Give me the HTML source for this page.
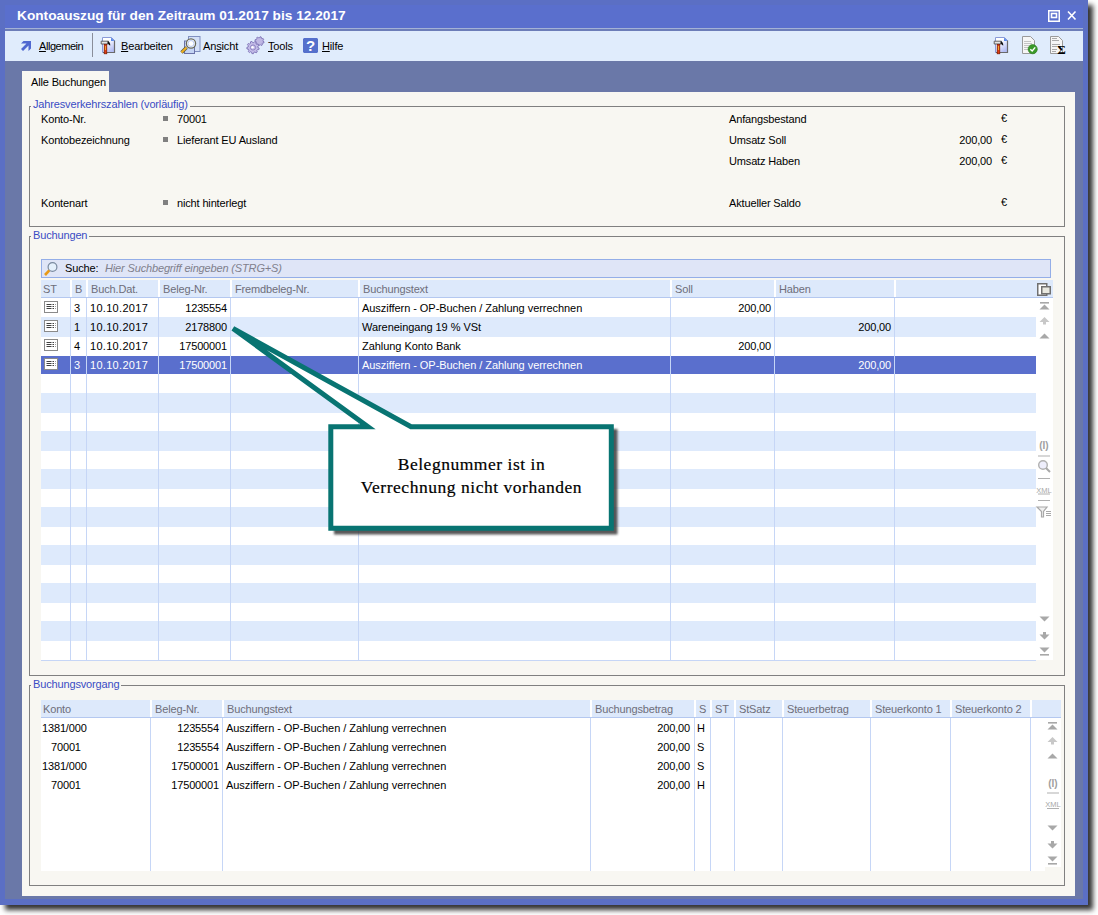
<!DOCTYPE html>
<html><head><meta charset="utf-8"><style>
*{margin:0;padding:0;box-sizing:border-box}
html,body{width:1098px;height:915px;overflow:hidden;background:#fff;font-family:"Liberation Sans",sans-serif;font-size:11px;color:#000}
.a{position:absolute}
.t{position:absolute;white-space:nowrap;line-height:13px;letter-spacing:-0.15px}
.r{text-align:right}
.gb{position:absolute;border:1px solid #808080}
.leg{position:absolute;background:#f8f7f2;color:#3a4cc4;padding:0 2px 0 2px;line-height:13px;white-space:nowrap;letter-spacing:-0.15px}
.hd{color:#6e6e7a}
.u{text-decoration:underline}
svg{position:absolute;overflow:visible}
</style></head><body>
<div class="a" style="left:0;top:0;width:1088px;height:905px;box-shadow:5px 5px 5px 0 rgba(0,0,0,0.8)"></div>
<div class="a" style="left:0px;top:0px;width:1088px;height:905px;background:#5b6fc4;"></div>
<div class="a" style="left:5px;top:5px;width:1078px;height:23px;background:#5a6fcd;"></div>
<div class="t " style="left:17px;top:7px;color:#fff;font-weight:bold;font-size:13.7px;line-height:17px;letter-spacing:0">Kontoauszug für den Zeitraum 01.2017 bis 12.2017</div>
<svg style="left:1047px;top:9px" width="14" height="14"><rect x="1.75" y="1.75" width="10.5" height="10.5" fill="none" stroke="#fff" stroke-width="1.5"/><rect x="4.5" y="4.5" width="5" height="4" fill="none" stroke="#fff" stroke-width="1.6"/></svg>
<svg style="left:1066px;top:10px" width="12" height="12"><path d="M2 1.5 L9.5 9.5 M9.5 1.5 L2 9.5" stroke="#fff" stroke-width="1.6"/></svg>
<div class="a" style="left:5px;top:28px;width:1078px;height:1px;background:#a4b2d6;"></div>
<div class="a" style="left:5px;top:29px;width:1078px;height:2px;background:#6c7db8;"></div>
<div class="a" style="left:5px;top:31px;width:1078px;height:30px;background:#e0ecfc;"></div>
<div class="a" style="left:5px;top:61px;width:1078px;height:838px;background:#6a78a8;"></div>
<div class="a" style="left:22px;top:71px;width:87px;height:22px;background:#f8f7f2;"></div>
<div class="a" style="left:22px;top:92px;width:1053px;height:804px;background:#f8f7f2;"></div>
<div class="t " style="left:31px;top:76px;">Alle Buchungen</div>
<svg style="left:16px;top:34px" width="24" height="24"><path d="M5 9.5 L7.5 7 L15 7 L15 14.5 L12.5 17 L12.5 11.5 L7 17 L5 15 L10.5 9.5 Z" fill="#5068d0"/></svg>
<div class="t " style="left:39px;top:40px;letter-spacing:-0.45px"><span class="u">A</span>llgemein</div>
<div class="a" style="left:92px;top:33px;width:1px;height:24px;background:#8a8e9a;"></div>
<svg style="left:96px;top:34px" width="24" height="24">
<defs><linearGradient id="dg96" x1="0" y1="0" x2="0.6" y2="1"><stop offset="0" stop-color="#fff"/><stop offset="0.35" stop-color="#fff"/><stop offset="1" stop-color="#b4bef4"/></linearGradient></defs>
<path d="M6.5 3.5 H15.5 L18.5 6.5 V18.5 H6.5 Z" fill="url(#dg96)" stroke="#8a9ad8" stroke-width="1"/>
<path d="M18.5 6.5 V18.5 H7" fill="none" stroke="#6a6a6a" stroke-width="1.2"/>
<path d="M15 3.5 L18.5 7 H15 Z" fill="#5a8ae8"/>
<path d="M5.2 7.2 H12.5 V10 H5.2 Z" fill="#e6e6e6" stroke="#555" stroke-width="0.9"/>
<path d="M11.5 7.2 Q14.3 7.5 14.3 11.5 L13 11 Q12.8 9.5 11.5 10 Z" fill="#111"/>
<rect x="8.2" y="10.3" width="2.6" height="9.5" fill="#e03c12" stroke="#7a1a00" stroke-width="0.7"/>
<rect x="9" y="12" width="0.8" height="4" fill="#f8c030"/>
</svg>
<div class="t " style="left:121px;top:40px;"><span class="u">B</span>earbeiten</div>
<svg style="left:180px;top:35px" width="22" height="20">
<rect x="8.5" y="1.5" width="11.5" height="15" fill="#d4e0f8" stroke="#8090c0" stroke-width="1"/>
<rect x="4.5" y="6" width="10" height="12.5" fill="#c4d4f4" stroke="#6a72a8" stroke-width="1"/>
<circle cx="11" cy="8.5" r="4.6" fill="#fff" stroke="#6a6a5a" stroke-width="1.3"/><circle cx="11" cy="8.5" r="3" fill="none" stroke="#b8c8f0" stroke-width="1"/>
<path d="M1.5 17.5 L6.5 12.5" stroke="#5a5a40" stroke-width="3.4"/><path d="M1.5 17.5 L6.5 12.5" stroke="#f0b020" stroke-width="2"/>
</svg>
<div class="t " style="left:203px;top:40px;">An<span class="u">s</span>icht</div>
<svg style="left:245px;top:36px" width="22" height="20">
<path d="M18.10 5.30 L19.07 5.84 L18.75 7.06 L17.64 7.06 L17.05 7.85 L17.35 8.91 L16.26 9.55 L15.48 8.76 L14.50 8.90 L13.96 9.87 L12.74 9.55 L12.74 8.44 L11.95 7.85 L10.89 8.15 L10.25 7.06 L11.04 6.28 L10.90 5.30 L9.93 4.76 L10.25 3.54 L11.36 3.54 L11.95 2.75 L11.65 1.69 L12.74 1.05 L13.52 1.84 L14.50 1.70 L15.04 0.73 L16.26 1.05 L16.26 2.16 L17.05 2.75 L18.11 2.45 L18.75 3.54 L17.96 4.32 Z" fill="#c0b8e4" stroke="#7a70b4" stroke-width="0.9"/>
<path d="M12.90 11.50 L14.17 12.15 L13.83 13.62 L12.40 13.65 L11.75 14.65 L12.31 15.96 L11.10 16.87 L9.99 15.98 L8.85 16.33 L8.43 17.68 L6.92 17.61 L6.65 16.21 L5.55 15.74 L4.36 16.52 L3.25 15.49 L3.94 14.24 L3.40 13.18 L1.98 13.00 L1.80 11.50 L3.13 10.99 L3.40 9.82 L2.43 8.78 L3.25 7.51 L4.60 7.98 L5.55 7.26 L5.48 5.84 L6.92 5.39 L7.66 6.61 L8.85 6.67 L9.71 5.54 L11.10 6.13 L10.88 7.54 L11.75 8.35 L13.14 8.03 L13.83 9.38 L12.75 10.31 Z" fill="#c4bce8" stroke="#7a70b4" stroke-width="0.9"/>
<circle cx="8" cy="11.5" r="2.6" fill="none" stroke="#8a80c0" stroke-width="0.9"/>
<circle cx="7.5" cy="11.2" r="1.2" fill="#fff"/>
</svg>
<div class="t " style="left:268px;top:40px;"><span class="u">T</span>ools</div>
<svg style="left:303px;top:38px" width="15" height="15"><path d="M1 0 H14 L15 1 V14 L14 15 H1 L0 14 V1 Z" fill="#5570cc"/><text x="7.5" y="13" font-family="Liberation Sans" font-weight="bold" font-size="15" fill="#fff" text-anchor="middle">?</text></svg>
<div class="t " style="left:322px;top:40px;"><span class="u">H</span>ilfe</div>
<svg style="left:989px;top:34px" width="24" height="24">
<defs><linearGradient id="dg989" x1="0" y1="0" x2="0.6" y2="1"><stop offset="0" stop-color="#fff"/><stop offset="0.35" stop-color="#fff"/><stop offset="1" stop-color="#b4bef4"/></linearGradient></defs>
<path d="M6.5 3.5 H15.5 L18.5 6.5 V18.5 H6.5 Z" fill="url(#dg989)" stroke="#8a9ad8" stroke-width="1"/>
<path d="M18.5 6.5 V18.5 H7" fill="none" stroke="#6a6a6a" stroke-width="1.2"/>
<path d="M15 3.5 L18.5 7 H15 Z" fill="#5a8ae8"/>
<path d="M5.2 7.2 H12.5 V10 H5.2 Z" fill="#e6e6e6" stroke="#555" stroke-width="0.9"/>
<path d="M11.5 7.2 Q14.3 7.5 14.3 11.5 L13 11 Q12.8 9.5 11.5 10 Z" fill="#111"/>
<rect x="8.2" y="10.3" width="2.6" height="9.5" fill="#e03c12" stroke="#7a1a00" stroke-width="0.7"/>
<rect x="9" y="12" width="0.8" height="4" fill="#f8c030"/>
</svg>
<svg style="left:1021px;top:36px" width="18" height="19">
<path d="M1.5 0.5 H9.5 L13.5 4.5 V17.5 H1.5 Z" fill="#f6f6f6" stroke="#9a9a9a" stroke-width="1"/>
<g stroke="#c4c4c4" stroke-width="1"><path d="M3 5.5 H10 M3 7.5 H11 M3 9.5 H11 M3 11.5 H8 M3 13.5 H8"/></g>
<circle cx="11.7" cy="13.2" r="4.6" fill="#3a9a2a" stroke="#2a7a1a" stroke-width="0.6"/>
<path d="M9.3 13.2 L11.2 15 L14.2 11.4" stroke="#fff" stroke-width="1.4" fill="none"/>
</svg>
<svg style="left:1049px;top:36px" width="18" height="19">
<path d="M1.5 0.5 H9.5 L13.5 4.5 V17.5 H1.5 Z" fill="#f6f6f6" stroke="#9a9a9a" stroke-width="1"/>
<g stroke="#aaa" stroke-width="1"><path d="M3 2.5 H8 M3 4.5 H10 M3 8.5 H11 M3 10.5 H8 M3 13.5 H8 M3 15.5 H7"/></g>
<text x="12.5" y="18" font-family="Liberation Serif" font-weight="bold" font-size="13" fill="#000" text-anchor="middle">Σ</text>
</svg>
<div class="gb" style="left:29px;top:106px;width:1036px;height:121px"></div>
<div class="leg" style="left:31px;top:98px">Jahresverkehrszahlen (vorläufig)</div>
<div class="t " style="left:41px;top:113px;">Konto-Nr.</div>
<div class="a" style="left:163px;top:116px;width:5px;height:5px;background:#808080;"></div>
<div class="t " style="left:177px;top:113px;">70001</div>
<div class="t " style="left:41px;top:134px;">Kontobezeichnung</div>
<div class="a" style="left:163px;top:137px;width:5px;height:5px;background:#808080;"></div>
<div class="t " style="left:177px;top:134px;">Lieferant EU Ausland</div>
<div class="t " style="left:41px;top:197px;">Kontenart</div>
<div class="a" style="left:163px;top:200px;width:5px;height:5px;background:#808080;"></div>
<div class="t " style="left:177px;top:197px;">nicht hinterlegt</div>
<div class="t " style="left:729px;top:113px;">Anfangsbestand</div>
<div class="t " style="left:1001px;top:112px;font-size:11px;letter-spacing:0">€</div>
<div class="t " style="left:729px;top:134px;">Umsatz Soll</div>
<div class="t r " style="left:792px;top:134px;width:200px;">200,00</div>
<div class="t " style="left:1001px;top:133px;font-size:11px;letter-spacing:0">€</div>
<div class="t " style="left:729px;top:155px;">Umsatz Haben</div>
<div class="t r " style="left:792px;top:155px;width:200px;">200,00</div>
<div class="t " style="left:1001px;top:154px;font-size:11px;letter-spacing:0">€</div>
<div class="t " style="left:729px;top:197px;">Aktueller Saldo</div>
<div class="t " style="left:1001px;top:196px;font-size:11px;letter-spacing:0">€</div>
<div class="gb" style="left:29px;top:236px;width:1036px;height:440px"></div>
<div class="leg" style="left:31px;top:229px">Buchungen</div>
<div class="a" style="left:41px;top:259px;width:1010px;height:19px;background:#dfe5f7;border:1px solid #94aee8"></div>
<svg style="left:43px;top:261px" width="16" height="16">
<circle cx="9.5" cy="6" r="4.4" fill="#e4f0fc" stroke="#7a8aa0" stroke-width="1.2"/>
<path d="M2 14 L6.3 9.4" stroke="#e89a18" stroke-width="2.6"/>
</svg>
<div class="t " style="left:65px;top:262px;">Suche:</div>
<div class="t " style="left:105px;top:262px;font-style:italic;color:#80808c;letter-spacing:-0.15px">Hier Suchbegriff eingeben (STRG+S)</div>
<div class="a" style="left:41px;top:280px;width:1012px;height:18px;background:#dde9fb;"></div>
<div class="a" style="left:41px;top:297px;width:1012px;height:1px;background:#b4c8f0;"></div>
<div class="a" style="left:70px;top:280px;width:2px;height:17px;background:#ffffff;"></div>
<div class="a" style="left:86px;top:280px;width:2px;height:17px;background:#ffffff;"></div>
<div class="a" style="left:158px;top:280px;width:2px;height:17px;background:#ffffff;"></div>
<div class="a" style="left:230px;top:280px;width:2px;height:17px;background:#ffffff;"></div>
<div class="a" style="left:358px;top:280px;width:2px;height:17px;background:#ffffff;"></div>
<div class="a" style="left:670px;top:280px;width:2px;height:17px;background:#ffffff;"></div>
<div class="a" style="left:774px;top:280px;width:2px;height:17px;background:#ffffff;"></div>
<div class="a" style="left:894px;top:280px;width:2px;height:17px;background:#ffffff;"></div>
<div class="a" style="left:41px;top:298px;width:1012px;height:362px;background:#ffffff;"></div>
<div class="a" style="left:41px;top:317px;width:995px;height:20px;background:#deeafc;"></div>
<div class="a" style="left:41px;top:356px;width:995px;height:18px;background:#5a6fcd;"></div>
<div class="a" style="left:41px;top:393px;width:995px;height:20px;background:#deeafc;"></div>
<div class="a" style="left:41px;top:431px;width:995px;height:20px;background:#deeafc;"></div>
<div class="a" style="left:41px;top:469px;width:995px;height:20px;background:#deeafc;"></div>
<div class="a" style="left:41px;top:507px;width:995px;height:20px;background:#deeafc;"></div>
<div class="a" style="left:41px;top:545px;width:995px;height:20px;background:#deeafc;"></div>
<div class="a" style="left:41px;top:583px;width:995px;height:20px;background:#deeafc;"></div>
<div class="a" style="left:41px;top:621px;width:995px;height:20px;background:#deeafc;"></div>
<div class="a" style="left:70px;top:298px;width:1px;height:362px;background:#c6d6f6;"></div>
<div class="a" style="left:86px;top:298px;width:1px;height:362px;background:#c6d6f6;"></div>
<div class="a" style="left:158px;top:298px;width:1px;height:362px;background:#c6d6f6;"></div>
<div class="a" style="left:230px;top:298px;width:1px;height:362px;background:#c6d6f6;"></div>
<div class="a" style="left:358px;top:298px;width:1px;height:362px;background:#c6d6f6;"></div>
<div class="a" style="left:670px;top:298px;width:1px;height:362px;background:#c6d6f6;"></div>
<div class="a" style="left:774px;top:298px;width:1px;height:362px;background:#c6d6f6;"></div>
<div class="a" style="left:894px;top:298px;width:1px;height:362px;background:#c6d6f6;"></div>
<div class="a" style="left:41px;top:660px;width:995px;height:1px;background:#c6d6f6;"></div>
<div class="t hd" style="left:43px;top:283px;">ST</div>
<div class="t hd" style="left:75px;top:283px;">B</div>
<div class="t hd" style="left:91px;top:283px;">Buch.Dat.</div>
<div class="t hd" style="left:163px;top:283px;">Beleg-Nr.</div>
<div class="t hd" style="left:235px;top:283px;">Fremdbeleg-Nr.</div>
<div class="t hd" style="left:363px;top:283px;">Buchungstext</div>
<div class="t hd" style="left:675px;top:283px;">Soll</div>
<div class="t hd" style="left:779px;top:283px;">Haben</div>
<svg style="left:44px;top:301px" width="14" height="12"><rect x="0.5" y="0.5" width="13" height="11" fill="#fff" stroke="#8a8a8a"/><g stroke="#404040" stroke-width="1"><path d="M2.5 3.5 H11.5 M2.5 5.5 H11.5 M2.5 7.5 H11.5" stroke-dasharray="5 1 1.5 1"/></g></svg>
<div class="t " style="left:74px;top:302px;">3</div>
<div class="t " style="left:90px;top:302px;letter-spacing:0.3px;">10.10.2017</div>
<div class="t r " style="left:27px;top:302px;width:200px;">1235554</div>
<div class="t " style="left:362px;top:302px;letter-spacing:-0.05px;">Ausziffern - OP-Buchen / Zahlung verrechnen</div>
<div class="t r " style="left:571px;top:302px;width:200px;">200,00</div>
<svg style="left:44px;top:320px" width="14" height="12"><rect x="0.5" y="0.5" width="13" height="11" fill="#fff" stroke="#8a8a8a"/><g stroke="#404040" stroke-width="1"><path d="M2.5 3.5 H11.5 M2.5 5.5 H11.5 M2.5 7.5 H11.5" stroke-dasharray="5 1 1.5 1"/></g></svg>
<div class="t " style="left:74px;top:321px;">1</div>
<div class="t " style="left:90px;top:321px;letter-spacing:0.3px;">10.10.2017</div>
<div class="t r " style="left:27px;top:321px;width:200px;">2178800</div>
<div class="t " style="left:362px;top:321px;letter-spacing:-0.05px;">Wareneingang 19 % VSt</div>
<div class="t r " style="left:691px;top:321px;width:200px;">200,00</div>
<svg style="left:44px;top:339px" width="14" height="12"><rect x="0.5" y="0.5" width="13" height="11" fill="#fff" stroke="#8a8a8a"/><g stroke="#404040" stroke-width="1"><path d="M2.5 3.5 H11.5 M2.5 5.5 H11.5 M2.5 7.5 H11.5" stroke-dasharray="5 1 1.5 1"/></g></svg>
<div class="t " style="left:74px;top:340px;">4</div>
<div class="t " style="left:90px;top:340px;letter-spacing:0.3px;">10.10.2017</div>
<div class="t r " style="left:27px;top:340px;width:200px;">17500001</div>
<div class="t " style="left:362px;top:340px;letter-spacing:-0.05px;">Zahlung Konto Bank</div>
<div class="t r " style="left:571px;top:340px;width:200px;">200,00</div>
<svg style="left:44px;top:358px" width="14" height="12"><rect x="0.5" y="0.5" width="13" height="11" fill="#fff" stroke="#8a8a8a"/><g stroke="#404040" stroke-width="1"><path d="M2.5 3.5 H11.5 M2.5 5.5 H11.5 M2.5 7.5 H11.5" stroke-dasharray="5 1 1.5 1"/></g></svg>
<div class="t " style="left:74px;top:359px;color:#fff;">3</div>
<div class="t " style="left:90px;top:359px;color:#fff;letter-spacing:0.3px;">10.10.2017</div>
<div class="t r " style="left:27px;top:359px;width:200px;color:#fff;">17500001</div>
<div class="t " style="left:362px;top:359px;color:#fff;letter-spacing:-0.05px;">Ausziffern - OP-Buchen / Zahlung verrechnen</div>
<div class="t r " style="left:691px;top:359px;width:200px;color:#fff;">200,00</div>
<svg style="left:1037px;top:283px" width="14" height="13">
<rect x="0.75" y="0.75" width="9" height="11.5" fill="#fff" stroke="#707070" stroke-width="1.5"/>
<rect x="4.75" y="3.75" width="8.5" height="7" fill="#e8e8e0" stroke="#707070" stroke-width="1.5"/>
</svg>
<svg style="left:1039px;top:302px" width="12" height="40">
<rect x="1" y="0" width="9" height="1.6" fill="#a8a8a8"/>
<path d="M0.5 7.5 L5.5 2.5 L10.5 7.5 Z" fill="#a8a8a8"/>
<path d="M0.5 20 L5.5 15 L10.5 20 H7 V22.5 H4 V20 Z" fill="#c8c8c8"/>
<path d="M0.5 36.5 L5.5 31.5 L10.5 36.5 Z" fill="#a8a8a8"/>
</svg>
<svg style="left:1039px;top:616px" width="12" height="42">
<path d="M0.5 0.5 L5.5 5.5 L10.5 0.5 Z" fill="#a8a8a8"/>
<path d="M4 16 V18.5 H0.5 L5.5 23.5 L10.5 18.5 H7 V16 Z" fill="#a8a8a8"/>
<path d="M0.5 31.5 L5.5 36.5 L10.5 31.5 Z" fill="#a8a8a8"/>
<rect x="1" y="38" width="9" height="1.6" fill="#a8a8a8"/>
</svg>
<svg style="left:1037px;top:438px" width="14" height="82">
<text x="7" y="11" font-family="Liberation Sans" font-weight="bold" font-size="10" fill="#a0a0a0" text-anchor="middle">(I)</text>
<rect x="1" y="17.5" width="12" height="1" fill="#b0b0b0"/>
<circle cx="6" cy="27" r="4.3" fill="#eeeefc" stroke="#b0b0b0" stroke-width="1.4"/>
<path d="M9 30 L13 34" stroke="#a8a8a8" stroke-width="2"/>
<rect x="1" y="40" width="12" height="1" fill="#b0b0b0"/>
<text x="7" y="55" font-family="Liberation Sans" font-size="7.5" fill="#a8a8a8" text-anchor="middle">XML</text>
<rect x="1" y="55.5" width="12" height="1" fill="#b0b0b0"/>
<rect x="1" y="62" width="12" height="1" fill="#b0b0b0"/>
<path d="M0 69 H10 L6.5 73.5 V79 H4.5 V73.5 Z" fill="#f0f0f0" stroke="#a8a8a8" stroke-width="1.2"/>
<path d="M9 73.5 H14 M9 75.5 H14 M9 77.5 H14" stroke="#a8a8a8" stroke-width="1"/>
</svg>
<div class="gb" style="left:29px;top:685px;width:1036px;height:201px"></div>
<div class="leg" style="left:31px;top:678px">Buchungsvorgang</div>
<div class="a" style="left:41px;top:700px;width:1020px;height:17px;background:#dde9fb;"></div>
<div class="a" style="left:41px;top:717px;width:1020px;height:1px;background:#b4c8f0;"></div>
<div class="a" style="left:150px;top:700px;width:2px;height:17px;background:#ffffff;"></div>
<div class="a" style="left:222px;top:700px;width:2px;height:17px;background:#ffffff;"></div>
<div class="a" style="left:590px;top:700px;width:2px;height:17px;background:#ffffff;"></div>
<div class="a" style="left:694px;top:700px;width:2px;height:17px;background:#ffffff;"></div>
<div class="a" style="left:710px;top:700px;width:2px;height:17px;background:#ffffff;"></div>
<div class="a" style="left:734px;top:700px;width:2px;height:17px;background:#ffffff;"></div>
<div class="a" style="left:782px;top:700px;width:2px;height:17px;background:#ffffff;"></div>
<div class="a" style="left:870px;top:700px;width:2px;height:17px;background:#ffffff;"></div>
<div class="a" style="left:950px;top:700px;width:2px;height:17px;background:#ffffff;"></div>
<div class="a" style="left:1030px;top:700px;width:2px;height:17px;background:#ffffff;"></div>
<div class="a" style="left:41px;top:718px;width:1004px;height:153px;background:#ffffff;"></div>
<div class="a" style="left:1045px;top:718px;width:16px;height:149px;background:#ffffff;"></div>
<div class="a" style="left:150px;top:718px;width:1px;height:153px;background:#c6d6f6;"></div>
<div class="a" style="left:222px;top:718px;width:1px;height:153px;background:#c6d6f6;"></div>
<div class="a" style="left:590px;top:718px;width:1px;height:153px;background:#c6d6f6;"></div>
<div class="a" style="left:694px;top:718px;width:1px;height:153px;background:#c6d6f6;"></div>
<div class="a" style="left:710px;top:718px;width:1px;height:153px;background:#c6d6f6;"></div>
<div class="a" style="left:734px;top:718px;width:1px;height:153px;background:#c6d6f6;"></div>
<div class="a" style="left:782px;top:718px;width:1px;height:153px;background:#c6d6f6;"></div>
<div class="a" style="left:870px;top:718px;width:1px;height:153px;background:#c6d6f6;"></div>
<div class="a" style="left:950px;top:718px;width:1px;height:153px;background:#c6d6f6;"></div>
<div class="a" style="left:1030px;top:718px;width:1px;height:153px;background:#c6d6f6;"></div>
<div class="t hd" style="left:43px;top:703px;">Konto</div>
<div class="t hd" style="left:155px;top:703px;">Beleg-Nr.</div>
<div class="t hd" style="left:227px;top:703px;">Buchungstext</div>
<div class="t hd" style="left:595px;top:703px;">Buchungsbetrag</div>
<div class="t hd" style="left:699px;top:703px;">S</div>
<div class="t hd" style="left:715px;top:703px;">ST</div>
<div class="t hd" style="left:739px;top:703px;">StSatz</div>
<div class="t hd" style="left:787px;top:703px;">Steuerbetrag</div>
<div class="t hd" style="left:875px;top:703px;">Steuerkonto 1</div>
<div class="t hd" style="left:955px;top:703px;">Steuerkonto 2</div>
<div class="t " style="left:42px;top:722px;">1381/000</div>
<div class="t r " style="left:19px;top:722px;width:200px;">1235554</div>
<div class="t " style="left:226px;top:722px;letter-spacing:-0.05px">Ausziffern - OP-Buchen / Zahlung verrechnen</div>
<div class="t r " style="left:490px;top:722px;width:200px;">200,00</div>
<div class="t " style="left:697px;top:722px;">H</div>
<div class="t " style="left:42px;top:741px;"><span style="padding-left:9px">70001</span></div>
<div class="t r " style="left:19px;top:741px;width:200px;">1235554</div>
<div class="t " style="left:226px;top:741px;letter-spacing:-0.05px">Ausziffern - OP-Buchen / Zahlung verrechnen</div>
<div class="t r " style="left:490px;top:741px;width:200px;">200,00</div>
<div class="t " style="left:697px;top:741px;">S</div>
<div class="t " style="left:42px;top:760px;">1381/000</div>
<div class="t r " style="left:19px;top:760px;width:200px;">17500001</div>
<div class="t " style="left:226px;top:760px;letter-spacing:-0.05px">Ausziffern - OP-Buchen / Zahlung verrechnen</div>
<div class="t r " style="left:490px;top:760px;width:200px;">200,00</div>
<div class="t " style="left:697px;top:760px;">S</div>
<div class="t " style="left:42px;top:779px;"><span style="padding-left:9px">70001</span></div>
<div class="t r " style="left:19px;top:779px;width:200px;">17500001</div>
<div class="t " style="left:226px;top:779px;letter-spacing:-0.05px">Ausziffern - OP-Buchen / Zahlung verrechnen</div>
<div class="t r " style="left:490px;top:779px;width:200px;">200,00</div>
<div class="t " style="left:697px;top:779px;">H</div>
<svg style="left:1047px;top:722px" width="12" height="40">
<rect x="1" y="0" width="9" height="1.6" fill="#a8a8a8"/>
<path d="M0.5 7.5 L5.5 2.5 L10.5 7.5 Z" fill="#a8a8a8"/>
<path d="M0.5 20 L5.5 15 L10.5 20 H7 V22.5 H4 V20 Z" fill="#c8c8c8"/>
<path d="M0.5 36.5 L5.5 31.5 L10.5 36.5 Z" fill="#a8a8a8"/>
</svg>
<svg style="left:1046px;top:776px" width="14" height="36">
<text x="7" y="11" font-family="Liberation Sans" font-weight="bold" font-size="10" fill="#a0a0a0" text-anchor="middle">(I)</text>
<rect x="1" y="16.5" width="12" height="1" fill="#b0b0b0"/>
<text x="7" y="31" font-family="Liberation Sans" font-size="7.5" fill="#a8a8a8" text-anchor="middle">XML</text>
<rect x="1" y="32" width="12" height="1" fill="#b0b0b0"/>
</svg>
<svg style="left:1047px;top:825px" width="12" height="42">
<path d="M0.5 0.5 L5.5 5.5 L10.5 0.5 Z" fill="#a8a8a8"/>
<path d="M4 16 V18.5 H0.5 L5.5 23.5 L10.5 18.5 H7 V16 Z" fill="#a8a8a8"/>
<path d="M0.5 31.5 L5.5 36.5 L10.5 31.5 Z" fill="#a8a8a8"/>
<rect x="1" y="38" width="9" height="1.6" fill="#a8a8a8"/>
</svg>
<svg style="left:0;top:0" width="1098" height="915">
<defs><filter id="sh" x="-10%" y="-10%" width="130%" height="130%"><feGaussianBlur stdDeviation="1"/></filter></defs>
<path d="M334 429 H617.5 V534.5 H334 Z" fill="#3a3a3a" opacity="0.85" filter="url(#sh)"/>
<path d="M233 328.5 L368 426.8 H330.8 V528.3 H611.3 V426.8 H411 Z" fill="#fff" stroke="#087472" stroke-width="5" stroke-linejoin="miter" stroke-miterlimit="4"/>
</svg>
<div class="t" style="left:330px;top:453px;width:283px;text-align:center;font-family:'Liberation Serif',serif;font-size:17.5px;line-height:23px;letter-spacing:0.53px;color:#000;-webkit-text-stroke:0.2px #000">Belegnummer ist in<br>Verrechnung nicht vorhanden</div>
</body></html>
